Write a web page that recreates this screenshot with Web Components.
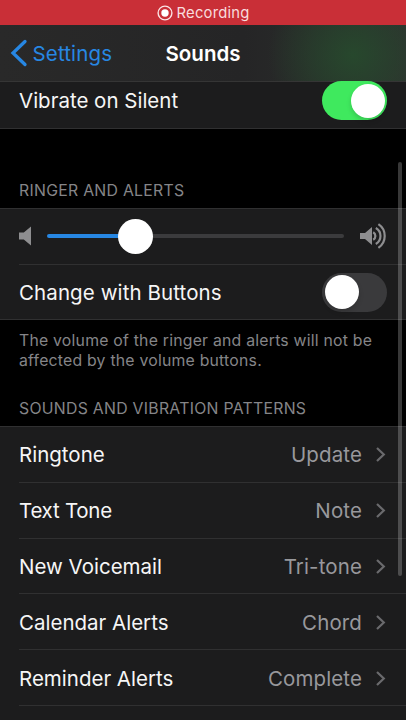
<!DOCTYPE html>
<html lang="en">
<head>
<meta charset="utf-8">
<title>Sounds</title>
<style>
  html, body {
    margin: 0;
    height: 100%;
    background: #000;
    overflow: hidden;
  }
</style>
</head>
<body>
<sounds-screen></sounds-screen>

<script>
function define(name, html) {
  const template = document.createElement('template');
  template.innerHTML = html;
  customElements.define(name, class extends HTMLElement {
    constructor() {
      super();
      this.attachShadow({ mode: 'open' }).appendChild(template.content.cloneNode(true));
    }
  });
}

define('recording-bar', `
  <style>
    :host {
      display: flex;
      justify-content: center;
      align-items: center;
      gap: 4px;
      height: 25px;
      flex: none;
      box-sizing: border-box;
      padding-top: 1px;
      background: #c92f37;
      color: #f8dcdd;
      font-size: 14.8px;
      letter-spacing: 0.2px;
    }
    svg { display: block; }
  </style>
  <svg width="16" height="16" viewBox="0 0 16 16">
    <circle cx="8" cy="8" r="6.9" fill="none" stroke="#fbe3e4" stroke-width="1.4"/>
    <circle cx="8" cy="8" r="3.7" fill="#fff"/>
  </svg>
  <span><slot></slot></span>
`);

define('nav-bar', `
  <style>
    :host {
      display: grid;
      grid-template-columns: 1fr auto 1fr;
      align-items: center;
      height: 57px;
      flex: none;
      box-sizing: border-box;
      padding: 0 10px;
      border-bottom: 1px solid #353535;
      background:
        radial-gradient(ellipse 85px 75px at 353px 30px, rgba(38, 76, 45, 0.85), rgba(38, 72, 45, 0.5) 50%, rgba(38, 66, 44, 0) 100%),
        linear-gradient(90deg, #292929 0, #252526 60%, #2c302d 90%, #2e312f 100%);
    }
    .back {
      display: flex;
      align-items: center;
      gap: 4.5px;
      color: #2787e3;
      font-size: 20.5px;
      letter-spacing: 0.15px;
    }
    .title {
      color: #fff;
      font-size: 20.5px;
      font-weight: 600;
    }
    svg { display: block; }
  </style>
  <div class="back">
    <svg width="18" height="28" viewBox="0 0 18 28">
      <path d="M15 2.5 L3 14 L15 25.5" fill="none" stroke="#2787e3" stroke-width="3.3" stroke-linecap="round"/>
    </svg>
    <span><slot name="back"></slot></span>
  </div>
  <div class="title"><slot></slot></div>
`);

define('toggle-switch', `
  <style>
    :host {
      display: flex;
      width: 65px;
      height: 39px;
      box-sizing: border-box;
      padding: 2.5px;
      border-radius: 20px;
      background: #3a3a3c;
    }
    :host([on]) {
      justify-content: flex-end;
      background: #3fe95e;
    }
    .knob {
      width: 34px;
      height: 34px;
      border-radius: 50%;
      background: #fff;
      box-shadow: 0 3px 5px rgba(0, 0, 0, 0.15);
    }
  </style>
  <div class="knob"></div>
`);

define('list-group', `
  <style>
    :host {
      display: flex;
      flex-direction: column;
      flex: none;
      box-sizing: border-box;
      background: #1c1c1d;
      border-top: 1px solid #303031;
      border-bottom: 1px solid #303031;
    }
    :host([under-nav]) { border-top: none; }
  </style>
  <slot></slot>
`);

define('list-row', `
  <style>
    :host {
      display: block;
      height: 55.8px;
      box-sizing: border-box;
      padding-left: 19px;
    }
    .inner {
      display: flex;
      align-items: center;
      height: 100%;
      box-sizing: border-box;
      padding: 1px 19px 0 0;
      border-bottom: 1px solid #303031;
    }
    :host([last]) { height: 54.4px; }
    :host([last]) .inner { border-bottom: none; }
    :host([short]) { height: 46px; }
    :host([short]) .inner { padding: 0 19px 9px 0; }
    .label {
      flex: 1;
      color: #f6f6f6;
      white-space: nowrap;
    }
  </style>
  <div class="inner">
    <div class="label"><slot></slot></div>
    <slot name="end"></slot>
  </div>
`);

define('row-value', `
  <style>
    :host {
      display: flex;
      align-items: center;
      gap: 13px;
      color: #98989c;
      padding-right: 1px;
      letter-spacing: 0.12px;
    }
    svg { display: block; }
  </style>
  <span><slot></slot></span>
  <svg width="11" height="17" viewBox="0 0 11 17">
    <path d="M2 2 L8.8 8.5 L2 15" fill="none" stroke="#6a6a6d" stroke-width="2.2"/>
  </svg>
`);

define('section-label', `
  <style>
    :host {
      display: flex;
      align-items: flex-end;
      flex: none;
      box-sizing: border-box;
      padding: 0 19px 7px 19px;
      color: #858588;
      font-size: 15.8px;
      letter-spacing: 0.28px;
      line-height: 20px;
      white-space: nowrap;
    }
  </style>
  <slot></slot>
`);

define('section-note', `
  <style>
    :host {
      display: block;
      flex: none;
      height: 60px;
      box-sizing: border-box;
      padding: 11px 19px 0 19px;
      color: #858588;
      font-size: 15.8px;
      letter-spacing: 0.22px;
      line-height: 20.5px;
      white-space: nowrap;
    }
  </style>
  <slot></slot>
`);

define('volume-slider', `
  <style>
    :host {
      display: flex;
      align-items: center;
      height: 55.6px;
      margin-left: 19px;
      box-sizing: border-box;
      padding: 0 19px 0 0;
      border-bottom: 1px solid #303031;
    }
    .track {
      display: flex;
      align-items: center;
      flex: 1;
      margin: 0 16px 0 15px;
    }
    .filled {
      width: 74px;
      height: 4px;
      border-radius: 2px 0 0 2px;
      background: #2787e3;
    }
    .thumb {
      width: 35px;
      height: 35px;
      margin: 0 -3px;
      border-radius: 50%;
      background: #fff;
      z-index: 1;
    }
    .rest {
      flex: 1;
      height: 4px;
      border-radius: 0 2px 2px 0;
      background: #3b3b3d;
    }
    svg { display: block; }
  </style>
  <svg width="13" height="20" viewBox="0 0 13 20">
    <path d="M0 6.5 H4.8 L12 0.5 V19.5 L4.8 13.5 H0 Z" fill="#8e8e90"/>
  </svg>
  <div class="track">
    <div class="filled"></div>
    <div class="thumb"></div>
    <div class="rest"></div>
  </div>
  <svg width="27" height="26" viewBox="0 0 27 26">
    <path d="M0 10 H5 L12 4 V22 L5 16 H0 Z" fill="#8e8e90"/>
    <g fill="none" stroke="#8e8e90" stroke-width="2.2">
      <path d="M13.2 9.2 A4.4 4.4 0 0 1 13.2 16.8"/>
      <path d="M15.8 5 A9.2 9.2 0 0 1 15.8 21"/>
      <path d="M18.4 1.2 A14.2 14.2 0 0 1 18.4 24.8"/>
    </g>
  </svg>
`);

define('scroll-thumb', `
  <style>
    :host {
      display: block;
      position: absolute;
      top: 162px;
      right: 4px;
      width: 4px;
      height: 414px;
      border-radius: 2px;
      background: rgba(255, 255, 255, 0.22);
    }
  </style>
`);

define('sounds-screen', `
  <style>
    :host {
      display: flex;
      flex-direction: column;
      position: relative;
      width: 406px;
      height: 720px;
      overflow: hidden;
      background: #000;
      font-family: Inter, "Liberation Sans", sans-serif;
      font-size: 20.5px;
    }
    .ringer { height: 79px; }
    .patterns { height: 46px; }
    .tight { letter-spacing: -0.25px; }
    .wide { letter-spacing: 0.1px; }
  </style>
  <recording-bar>Recording</recording-bar>
  <nav-bar><span slot="back">Settings</span>Sounds</nav-bar>
  <list-group under-nav>
    <list-row short last>Vibrate on Silent<toggle-switch slot="end" on></toggle-switch></list-row>
  </list-group>

  <section-label class="ringer">RINGER AND ALERTS</section-label>
  <list-group>
    <volume-slider></volume-slider>
    <list-row last class="wide">Change with Buttons<toggle-switch slot="end"></toggle-switch></list-row>
  </list-group>
  <section-note>The volume of the ringer and alerts will not be<br>affected by the volume buttons.</section-note>

  <section-label class="patterns">SOUNDS AND VIBRATION PATTERNS</section-label>
  <list-group>
    <list-row>Ringtone<row-value slot="end">Update</row-value></list-row>
    <list-row class="tight">Text Tone<row-value slot="end">Note</row-value></list-row>
    <list-row>New Voicemail<row-value slot="end">Tri-tone</row-value></list-row>
    <list-row>Calendar Alerts<row-value slot="end">Chord</row-value></list-row>
    <list-row>Reminder Alerts<row-value slot="end">Complete</row-value></list-row>
    <list-row></list-row>
  </list-group>
  <scroll-thumb></scroll-thumb>
</sounds-screen>
`);
</script>
</body>
</html>
